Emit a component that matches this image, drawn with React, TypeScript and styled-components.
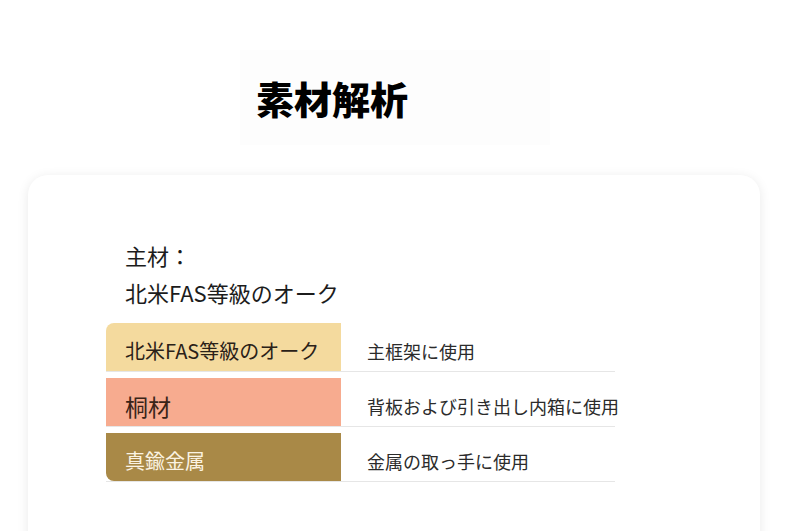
import styled, { createGlobalStyle } from "styled-components";

const GlobalStyle = createGlobalStyle`
  body {
    margin: 0;
    background: #ffffff;
    font-family: "Noto Sans CJK JP", "Noto Sans", sans-serif;
    color: #1f1f1f;
  }
`;

const rows = [
  { name: "北米FAS等級のオーク", use: "主框架に使用", bg: "#f4da9e", fg: "#2a2118", size: 20 },
  { name: "桐材", use: "背板および引き出し内箱に使用", bg: "#f7ab8f", fg: "#3a2418", size: 23 },
  { name: "真鍮金属", use: "金属の取っ手に使用", bg: "#a98947", fg: "#fbf3e2", size: 20 },
];

export default function App() {
  return (
    <Page>
      <GlobalStyle />
      <TitleBox>
        <Title>素材解析</Title>
      </TitleBox>
      <Card>
        <Label>主材：</Label>
        <Label>北米FAS等級のオーク</Label>
        <Table>
          {rows.map((r) => (
            <Row key={r.name}>
              <NameCell $bg={r.bg} $fg={r.fg} $size={r.size}>
                {r.name}
              </NameCell>
              <UseCell>{r.use}</UseCell>
            </Row>
          ))}
        </Table>
      </Card>
    </Page>
  );
}

const Page = styled.div`
  width: 790px;
  height: 531px;
  overflow: hidden;
  padding-top: 50px;
  box-sizing: border-box;
`;

const TitleBox = styled.div`
  margin-left: 240px;
  width: 310px;
  height: 95px;
  background: #fdfdfd;
  display: flex;
  align-items: center;
  padding-left: 16px;
  box-sizing: border-box;
`;

const Title = styled.h1`
  margin: 0;
  font-size: 38px;
  font-weight: 900;
  color: #000000;
  line-height: 1;
`;

const Card = styled.div`
  margin: 30px 0 0 28px;
  width: 732px;
  height: 400px;
  background: #ffffff;
  border-radius: 20px;
  box-shadow: 0 2px 12px rgba(0, 0, 0, 0.09);
  padding: 62px 0 0 97px;
  box-sizing: border-box;
`;

const Label = styled.div`
  font-size: 22px;
  line-height: 37px;
  color: #1c1c1c;
`;

const Table = styled.div`
  margin: 12px 0 0 -19px;
  width: 509px;
`;

const Row = styled.div`
  display: grid;
  grid-template-columns: 235px 1fr;
  height: 48px;
  border-bottom: 1px solid #e6e6e6;
  margin-bottom: 6px;

  &:first-child > :first-child {
    border-top-left-radius: 8px;
  }

  &:last-child > :first-child {
    border-bottom-left-radius: 8px;
  }
`;

const NameCell = styled.div<{ $bg: string; $fg: string; $size: number }>`
  background: ${(p) => p.$bg};
  color: ${(p) => p.$fg};
  font-size: ${(p) => p.$size}px;
  display: flex;
  align-items: center;
  padding: 7px 0 0 19px;
  box-sizing: border-box;
  white-space: nowrap;
`;

const UseCell = styled.div`
  display: flex;
  align-items: center;
  padding: 7px 0 0 26px;
  box-sizing: border-box;
  font-size: 18px;
  color: #2b2b2b;
  white-space: nowrap;
`;
